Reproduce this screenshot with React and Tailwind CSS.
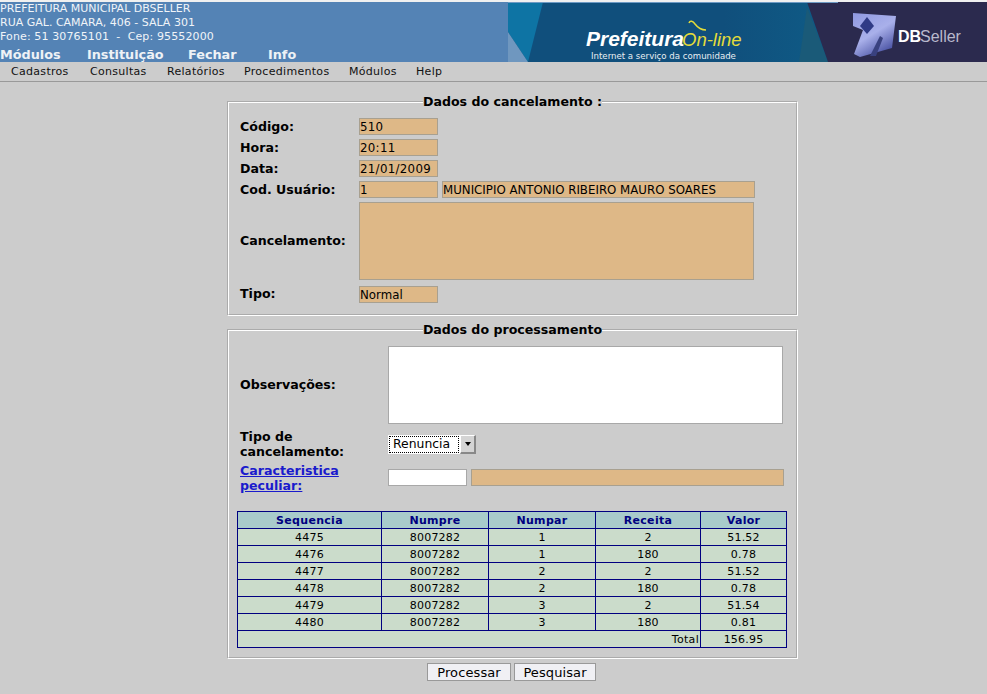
const font = "font-['DejaVu_Sans',sans-serif]"

const linhas = [
  ['4475', '8007282', '1', '2', '51.52'],
  ['4476', '8007282', '1', '180', '0.78'],
  ['4477', '8007282', '2', '2', '51.52'],
  ['4478', '8007282', '2', '180', '0.78'],
  ['4479', '8007282', '3', '2', '51.54'],
  ['4480', '8007282', '3', '180', '0.81'],
]

function Banner() {
  return (
    <svg width="479" height="60" viewBox="0 0 479 60" className="block shrink-0">
      <defs>
        <linearGradient id="faixa" x1="0" x2="1" y1="0" y2="0">
          <stop offset="0" stopColor="#104f7c" />
          <stop offset="0.45" stopColor="#104f7c" />
          <stop offset="1" stopColor="#0d6d95" />
        </linearGradient>
        <linearGradient id="cubo" x1="0" x2="0.6" y1="0" y2="1">
          <stop offset="0" stopColor="#8f98e0" />
          <stop offset="0.55" stopColor="#a9b0ea" />
          <stop offset="1" stopColor="#4a53a4" />
        </linearGradient>
      </defs>
      <rect width="479" height="60" fill="url(#faixa)" />
      <polygon points="0,0 35,0 20,60 0,30" fill="#0e74a4" />
      <polygon points="0,30 20,60 0,60" fill="#6f97bf" />
      <polygon points="299,5 320,60 291,60" fill="#1a5a78" />
      <polygon points="299,0 479,0 479,60 320,60" fill="#2b2a4e" />
      <rect width="330" height="1" fill="#6d9ac4" />
      <text x="78" y="44" fontFamily="Liberation Sans" fontWeight="700" fontStyle="italic" fontSize="21" fill="#fff">Prefeitura</text>
      <text x="174" y="44" fontFamily="Liberation Sans" fontStyle="italic" fontSize="18.5" fill="#e4dc3a">On-line</text>
      <path d="M181 21 c1 -3 4 -2 6 1 c3 4 6 6 11 6" fill="none" stroke="#e4dc3a" strokeWidth="1.5" />
      <text x="83" y="57" fontFamily="DejaVu Sans" fontSize="8.6" fill="#e8eef2">Internet a serviço da comunidade</text>
      <polygon points="345,11 388,14 384,46 352,55 346,52 355,28 345,24" fill="url(#cubo)" />
      <polygon points="359,15 366,24 359,32 352,24" fill="#2f3a85" />
      <polygon points="372,34 375,36 368,54 362,54" fill="#39417f" />
      <text x="390" y="40" fontFamily="Liberation Sans" fontWeight="700" fontSize="16" fill="#fff">DB</text>
      <text x="412" y="40" fontFamily="Liberation Sans" fontSize="16" fill="#b9b9cc">Seller</text>
    </svg>
  )
}

function Campo({ children, className = '' }) {
  return (
    <div className={`h-[17px] bg-[#deb887] border border-[#a8a090] text-[11.8px] leading-[17px] text-black overflow-hidden whitespace-nowrap ${className}`}>
      {children}
    </div>
  )
}

function Rotulo({ children }) {
  return <div className="text-[12.6px] leading-[15px] font-bold text-black">{children}</div>
}

function Grupo({ titulo, className = '', children }) {
  return (
    <fieldset className={`w-[571px] border-2 [border-style:groove] border-white ${className}`}>
      <legend className="mx-auto text-[12.6px] leading-[14px] font-bold text-black">{titulo}</legend>
      {children}
    </fieldset>
  )
}

function Th({ children }) {
  return <th className="border border-[#000080] bg-[#a9cbcb] text-[#000080] text-[11px] leading-[15px] font-bold h-[17px] p-0 tracking-[0.3px]">{children}</th>
}

function Td({ children }) {
  return <td className="border border-[#000080] text-center text-[11px] leading-[15px] h-[17px] p-0 tracking-[0.2px]">{children}</td>
}

export default function App() {
  return (
    <div className={`w-[987px] h-[694px] overflow-hidden bg-[#cccccc] text-black ${font}`}>
      <div className="h-[2px] bg-[#f0f0f0]" />
      <header className="h-[60px] bg-[#5483b5] flex justify-between">
        <div className="text-[#f0f4f8]">
          <div className="text-[11px] leading-[14px]">PREFEITURA MUNICIPAL DBSELLER</div>
          <div className="text-[11px] leading-[14px]">RUA GAL. CAMARA, 406 - SALA 301</div>
          <div className="text-[11px] leading-[14px] whitespace-pre tracking-[0.12px]">Fone: 51 30765101  -  Cep: 95552000</div>
          <nav className="flex text-[12.8px] leading-[15px] font-bold mt-[3px] text-[#eef2f6]">
            <span className="w-[87px]">Módulos</span>
            <span className="w-[101px]">Instituição</span>
            <span className="w-[80px]">Fechar</span>
            <span>Info</span>
          </nav>
        </div>
        <Banner />
      </header>

      <div className="h-[20px] pt-[2px] border-b border-[#999999] flex items-center pl-[11px] text-[11px] text-[#111] tracking-[0.3px]">
        <span className="w-[79px]">Cadastros</span>
        <span className="w-[77px]">Consultas</span>
        <span className="w-[77px]">Relatórios</span>
        <span className="w-[105px]">Procedimentos</span>
        <span className="w-[67px]">Módulos</span>
        <span>Help</span>
      </div>

      <main className="flex flex-col items-center pl-[38px] pt-[13px]">
        <Grupo titulo="Dados do cancelamento :" className="h-[221px] px-[11px]">
          <div className="grid grid-cols-[119px_1fr] gap-y-[4px] items-center pt-[9px]">
            <Rotulo>Código:</Rotulo>
            <Campo className="w-[79px] tracking-[0.3px]">510</Campo>
            <Rotulo>Hora:</Rotulo>
            <Campo className="w-[79px] tracking-[0.3px]">20:11</Campo>
            <Rotulo>Data:</Rotulo>
            <Campo className="w-[79px] tracking-[0.3px]">21/01/2009</Campo>
            <Rotulo>Cod. Usuário:</Rotulo>
            <div className="flex gap-[4px]">
              <Campo className="w-[79px]">1</Campo>
              <Campo className="w-[313px]">MUNICIPIO ANTONIO RIBEIRO MAURO SOARES</Campo>
            </div>
            <div className="-mt-[2px]"><Rotulo>Cancelamento:</Rotulo></div>
            <div className="h-[78px] w-[395px] bg-[#deb887] border border-[#a8a090]" />
            <Rotulo>Tipo:</Rotulo>
            <Campo className="w-[79px] mt-[2px]">Normal</Campo>
          </div>
        </Grupo>

        <Grupo titulo="Dados do processamento" className="h-[336px] mt-[7px] px-[8px]">
          <div className="grid grid-cols-[148px_1fr] items-center pl-[3px] pt-[9px]">
            <div className="-mt-[2px]"><Rotulo>Observações:</Rotulo></div>
            <div className="h-[78px] w-[395px] bg-white border border-[#a8a8a8]" />
            <div className="mt-[5px]"><Rotulo>Tipo de<br />cancelamento:</Rotulo></div>
            <div className="mt-[5px] flex">
              <div className="h-[19px] w-[88px] bg-white flex items-center text-[12.4px] pl-[1px]">
                <span className="w-[70px] h-[17px] pl-[3px] leading-[14px] border border-dotted border-black">Renuncia</span>
                <span className="ml-auto w-[16px] h-[19px] bg-[#d4d4d4] border-t border-l border-t-white border-l-white border-r-2 border-b-2 border-r-[#888] border-b-[#888] flex items-center justify-center">
                  <span className="border-x-[3.5px] border-x-transparent border-t-[4px] border-t-black" />
                </span>
              </div>
            </div>
            <div className="mt-[3px] pt-[1px]"><a className="text-[12.6px] leading-[15px] font-bold text-[#1a1acc] underline block">Caracteristica<br />peculiar:</a></div>
            <div className="mt-[3px] flex gap-[4px]">
              <div className="h-[17px] w-[79px] bg-white border border-[#a8a8a8]" />
              <div className="h-[17px] w-[313px] bg-[#deb887] border border-[#a8a090]" />
            </div>
          </div>
          <table className="mt-[18px] w-[549px] border-collapse table-fixed">
            <colgroup>
              <col className="w-[144px]" />
              <col className="w-[107px]" />
              <col className="w-[107px]" />
              <col className="w-[105px]" />
              <col className="w-[86px]" />
            </colgroup>
            <thead>
              <tr>
                <Th>Sequencia</Th><Th>Numpre</Th><Th>Numpar</Th><Th>Receita</Th><Th>Valor</Th>
              </tr>
            </thead>
            <tbody>
              {linhas.map((l) => (
                <tr key={l[0]} className="bg-[#cbdccb]">
                  {l.map((v, i) => <Td key={i}>{v}</Td>)}
                </tr>
              ))}
              <tr className="bg-[#cbdccb]">
                <td colSpan={4} className="border border-[#000080] text-right text-[11px] leading-[15px] h-[17px] p-0 pr-[1px] tracking-[0.3px]">Total</td>
                <Td>156.95</Td>
              </tr>
            </tbody>
          </table>
        </Grupo>

        <div className="flex gap-[3px] mt-[4px] mr-[2px]">
          <button className="h-[18px] w-[84px] bg-[#f0f0f4] border border-[#999] text-[13px] leading-none tracking-[0.1px]">Processar</button>
          <button className="h-[18px] w-[82px] bg-[#f0f0f4] border border-[#999] text-[13px] leading-none tracking-[0.1px]">Pesquisar</button>
        </div>
      </main>
    </div>
  )
}
